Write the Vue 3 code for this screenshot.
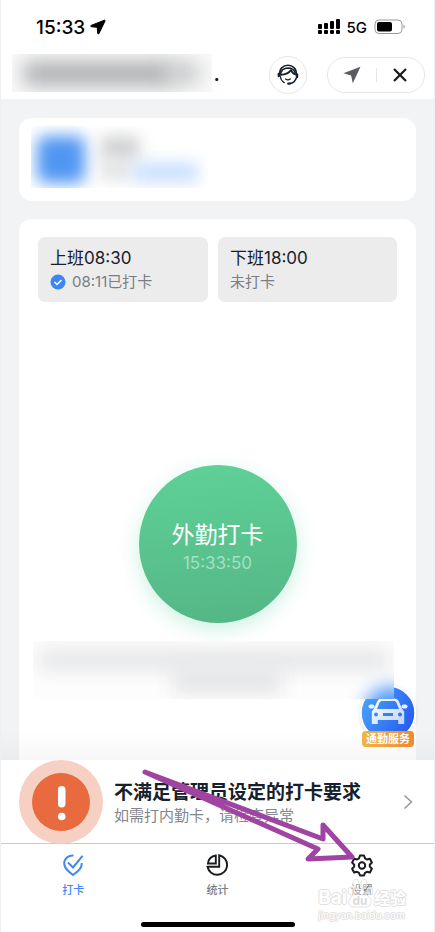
<script setup>
import { ref } from 'vue'

const shifts = [
  { id: 'in', title: '上班08:30', note: '08:11已打卡', done: true },
  { id: 'out', title: '下班18:00', note: '未打卡', done: false }
]
const clock = ref('15:33:50')
const signal = [5, 6, 8, 10]
</script>

<template>
  <div class="screen">
    <header>
      <div class="status">
        <div class="time">
          <span>15:33</span>
          <svg width="16" height="16" viewBox="0 0 16 16"><path d="M14.4 1.2 1.2 6.4c-.8.4-.7 1.2.2 1.3l5.800.6.5 5.900c.1.8.9 1 1.300.2L15 2c.3-.6-.1-1-.6-.8z" fill="#000" stroke="#000" stroke-width="1" /></svg>
        </div>
        <div class="radio">
          <svg width="22" height="16" viewBox="0 0 22 16">
            <g v-for="(h, i) in signal" :key="i">
              <rect :x="i * 6" :y="10 - h" width="4" :height="h" rx="1" />
              <rect :x="i * 6" y="11" width="4" height="4" rx="1" />
            </g>
          </svg>
          <span>5G</span>
          <svg width="32" height="16" viewBox="0 0 32 16">
            <rect x="1" y="1" width="27" height="13.500" rx="4" fill="none" stroke="#999" stroke-width="1" />
            <rect x="3" y="3" width="15" height="9.500" rx="2" />
            <path d="M29.500 5.500c1.800.6 1.800 3.400 0 4z" fill="#999" />
          </svg>
        </div>
      </div>
      <div class="nav">
        <span class="dots">..</span>
        <div class="masked-title"><i></i><b></b></div>
        <button class="service" aria-label="客服">
          <svg width="24" height="24" viewBox="0 0 24 24" fill="none" stroke="#17212c" stroke-linecap="round" stroke-linejoin="round">
            <path d="M3.800 12C3 6 7 2.300 12 2.300S20.800 6 20.300 11.500" stroke-width="1.600" />
            <path d="M4.500 11.500C5 7.500 8 5.200 12 5c3.500 0 6.300 2 7.200 5" stroke-width="1.500" />
            <path d="M2.800 11v2" stroke-width="2.400" />
            <path d="M21 11.500v2.500" stroke-width="2.400" />
            <path d="M4.500 11.800c5.500-.3 8.500-1.500 10.500-4.800M15 7c.6 2.200 2 3.500 4.500 4.500" stroke-width="1.800" />
            <path d="M4.300 13.500c.4 2.800 1.700 4.800 4 6.200M9.500 16c1.500 1.200 3.300 1.200 4.800 0" stroke-width="1.200" />
            <path d="M20.500 14.500c-1 3.500-3.300 5.700-7 6" stroke-width="1.500" />
            <path d="M12.300 20.600h1.500" stroke-width="2.400" />
          </svg>
        </button>
        <div class="capsule">
          <button aria-label="定位">
            <svg width="18" height="18" viewBox="0 0 18 18"><path d="M17.500.8.4 7.200l7.700 2.400 1.700 7.600z" fill="#5b5d60" /></svg>
          </button>
          <button aria-label="关闭">
            <svg width="16" height="16" viewBox="0 0 16 16"><path d="m2 2 12 12M14 2 2 14" stroke="#17191c" stroke-width="2.200" /></svg>
          </button>
        </div>
      </div>
    </header>

    <main>
      <section class="card profile">
        <div class="masked-profile"><i class="avatar"></i><i class="name"></i><i class="sub"></i><i class="tag"></i></div>
      </section>
      <section class="card punch">
        <div class="shifts">
          <div v-for="s in shifts" :key="s.id" class="shift">
            <div class="shift-title">{{ s.title }}</div>
            <div class="shift-note">
              <svg v-if="s.done" width="16" height="16" viewBox="0 0 16 16"><circle cx="8" cy="8" r="7.500" fill="#3e86f6" /><path d="m4.500 8 2.500 2.500 4.500-4.500" fill="none" stroke="#fff" stroke-width="1.500" /></svg>
              <span>{{ s.note }}</span>
            </div>
          </div>
        </div>
        <button class="clock">
          <span class="clock-title">外勤打卡</span>
          <span class="clock-time">{{ clock }}</span>
        </button>
        <div class="masked-place"><i class="line-one"></i><i class="line-two"></i><i class="blue"></i></div>
      </section>
      <a class="commute" href="#commute">
        <svg width="56" height="56" viewBox="0 0 56 56">
          <defs>
            <linearGradient id="sky" x1="0" y1="0.200" x2="1" y2="0.700"><stop offset="0" stop-color="#49a5fb" /><stop offset="1" stop-color="#265af0" /></linearGradient>
            <linearGradient id="body" x1="0" y1="0" x2="1" y2="1"><stop offset="0" stop-color="#fff" /><stop offset="1" stop-color="#bdd5fc" /></linearGradient>
          </defs>
          <circle cx="28" cy="28" r="27" fill="url(#sky)" stroke="#fff" stroke-width="1.500" />
          <path fill="url(#body)" fill-rule="evenodd" d="M22 13.500h12c2.500 0 4 1 5 3.200l3.200 7.300 2 2.500V39h-6v-4H17.800v4h-6V26.500l2-2.500L17 16.700c1-2.200 2.500-3.200 5-3.200zm.5 2.500c-1.700 0-2.500.6-3.100 2L17 24h22l-2.400-6c-.6-1.400-1.400-2-3.100-2zM16 27.500a2 2 0 1 0 0 4 2 2 0 0 0 0-4zm24 0a2 2 0 1 0 0 4 2 2 0 0 0 0-4zm-17 .5v3h10v-3z" />
          <rect x="8.500" y="19.500" width="6" height="4" rx="2" fill="#e8f2ff" /><rect x="41.500" y="19.500" width="6" height="4" rx="2" fill="#e8f2ff" />
        </svg>
        <span>通勤服务</span>
      </a>
    </main>

    <footer>
      <a class="alert" href="#rules">
        <svg class="warn" width="84" height="84" viewBox="0 0 84 84">
          <circle cx="42" cy="42" r="42" fill="#f6d0c2" /><circle cx="42" cy="42" r="29" fill="#e96a3e" />
          <rect x="39" y="26" width="7.500" height="21.500" rx="3.700" fill="#fff" /><circle cx="42.700" cy="56.500" r="3.800" fill="#fff" />
        </svg>
        <div class="alert-text">
          <strong>不满足管理员设定的打卡要求</strong>
          <span>如需打内勤卡，请检查异常</span>
        </div>
        <svg class="chevron" width="10" height="16" viewBox="0 0 10 16"><path d="m1.500 1.500 7 6.500-7 6.500" fill="none" stroke="#92969b" stroke-width="1.500" /></svg>
      </a>
      <nav class="tabs">
        <a class="active" href="#punch">
          <svg width="24" height="24" viewBox="0 0 24 24" fill="none" stroke="#3d87f5" stroke-width="2"><path d="M12.500 2.500c-5-.4-9.300 3-9.300 8 0 4.500 3.500 7.500 8.800 11.500 5.300-4 9.200-7 8.800-12M7 9.500l5 5 9.500-11.700" /></svg>
          <span>打卡</span>
        </a>
        <a href="#stats">
          <svg width="24" height="24" viewBox="0 0 24 24" fill="none" stroke="#191b1e" stroke-width="1.900"><path d="M14.200 2.200a9.900 9.900 0 1 1-11.700 11.600h11.700z" /><path d="M10.800 2.500v8H3c.5-4.200 3.500-7.500 7.800-8z" /></svg>
          <span>统计</span>
        </a>
        <a href="#settings">
          <svg width="24" height="24" viewBox="0 0 24 24" fill="none" stroke="#191b1e" stroke-width="2" stroke-linejoin="round"><path d="M10 2.500h4l1 2.900 1.900 1.100 3-.7 2 3.700-2.100 2.200v1.900l2.100 2.200-2 3.600-3-.6-1.900 1.100-1 2.600h-4l-1-2.600-1.900-1.100-3 .6-2-3.600 2.100-2.200v-1.900L2.100 9.500l2-3.700 3 .7L9 5.400z" /><circle cx="12" cy="12.500" r="3.200" /></svg>
          <span>设置</span>
        </a>
      </nav>
      <div class="home-bar"></div>
      <svg class="arrow" width="216" height="96" viewBox="0 0 216 96"><path d="m5 5 178 67v-14l29 32-44 2 10-10z" fill="none" stroke="#a044a2" stroke-width="5" stroke-linejoin="round" /><path d="m5 5 75 27v7z" fill="#a044a2" /></svg>
      <div class="watermark">
        <div class="mark-name">
          <span>Bai</span>
          <svg width="27" height="30" viewBox="0 0 27 30" fill="#fff" fill-opacity="0.400" stroke="#e1e1e1"><ellipse cx="9" cy="5" rx="3" ry="4.500" /><ellipse cx="17" cy="5" rx="3" ry="4.500" /><ellipse cx="4" cy="12" rx="3" ry="4" /><ellipse cx="23" cy="12" rx="3" ry="4" /><path d="M13 10c4 0 5 4 8 7 5 4 4 12-3 11H8c-7 1-8-6-3-11 3-3 4-7 8-7z" /><text x="13" y="26" text-anchor="middle" class="du">du</text></svg>
          <span>经验</span>
        </div>
        <div class="mark-url">jingyan.baidu.com</div>
      </div>
    </footer>
  </div>
</template>

<style>
body { background: #f2f3f5; }
</style>

<style scoped>
.screen { box-sizing: border-box; min-height: 100vh; display: flex; flex-direction: column; overflow: hidden; border: 0 solid #eeeff0; border-width: 0 1px; font-family: Inter, "Noto Sans CJK SC", sans-serif; color: #17212c; }
button { font: inherit; border: 0; padding: 0; background: none; display: flex; align-items: center; justify-content: center; }
a { color: inherit; text-decoration: none; }
svg { display: block; flex: none; }
header { background: #fff; }
.status { height: 54px; display: flex; align-items: center; justify-content: space-between; padding: 0 28px 0 35px; color: #000; }
.time { display: flex; align-items: center; gap: 5px; font-size: 19px; font-weight: 500; }
.radio { display: flex; align-items: center; gap: 7px; font-size: 15px; font-weight: 500; }
.nav { position: relative; height: 45px; display: flex; align-items: flex-start; padding: 0 9px 0 11px; }
.masked-title { position: absolute; left: 11px; top: 0; width: 200px; height: 38px; overflow: hidden; background: #fafafa; }
.masked-title i { position: absolute; left: 12px; top: 8px; width: 150px; height: 23px; background: #a8aaac; filter: blur(10px); }
.masked-title b { position: absolute; left: 156px; top: 8px; width: 32px; height: 22px; background: #c6c8ca; filter: blur(10px); }
.dots { flex: 1; padding-left: 195px; color: #17191c; font-size: 20px; font-weight: 600; line-height: 41px; }
.service { box-sizing: border-box; width: 38px; height: 38px; margin: 2px 20px 0 0; border: 1px solid #e5e6e7; border-radius: 50%; }
.capsule { box-sizing: border-box; display: flex; align-items: center; width: 98px; height: 36px; margin-top: 3px; border: 1px solid #e5e6e7; border-radius: 18px; }
.capsule button { flex: 1; height: 14px; }
.capsule button + button { border-left: 1px solid #e5e6e7; }
main { position: relative; flex: 1; display: flex; flex-direction: column; padding: 19px 18px 0; gap: 18px; }
main::after { content: ""; position: absolute; left: 0; right: 0; bottom: 0; height: 30px; background: linear-gradient(transparent, #00000008); pointer-events: none; }
.card { background: #fff; border-radius: 13px; }
.profile { box-sizing: border-box; height: 83px; padding: 8px 12px; }
.masked-profile { position: relative; width: 177px; height: 62px; overflow: hidden; }
.masked-profile i { position: absolute; filter: blur(8px); }
.masked-profile .avatar { left: 6px; top: 10px; width: 48px; height: 47px; border-radius: 8px; background: #5096f1; }
.masked-profile .name { left: 70px; top: 10px; width: 38px; height: 24px; background: #d0d1d2; }
.masked-profile .sub { left: 70px; top: 34px; width: 30px; height: 20px; background: #e0e1e2; }
.masked-profile .tag { left: 102px; top: 37px; width: 65px; height: 19px; background: #c7defd; }
.punch { flex: 1; display: flex; flex-direction: column; border-radius: 13px 13px 0 0; padding: 18px 14px 61px; }
.shifts { display: grid; grid-template-columns: 170fr 179fr; gap: 10px; padding: 0 5px; }
.shift { box-sizing: border-box; height: 65px; padding: 9px 12px 0; background: #ececec; border-radius: 7px; }
.shift-title { font-size: 17px; line-height: 24px; }
.shift-note { display: flex; align-items: center; gap: 6px; font-size: 15px; line-height: 24px; color: #797e85; }
.clock { flex-direction: column; align-self: center; box-sizing: border-box; width: 158px; height: 158px; margin-top: 163px; padding-top: 6px; border-radius: 50%; color: #fff; background: linear-gradient(175deg, #5fd198, #54b685); box-shadow: 0 6px 20px #35c98b40; }
.clock-title { font-size: 23px; line-height: 32px; font-weight: 400; }
.clock-time { font-size: 17px; line-height: 24px; color: #a5dfc4; }
.masked-place { position: relative; z-index: 2; height: 58px; margin: 18px 8px 0 0; overflow: hidden; background: #fdfdfd; }
.masked-place i { position: absolute; filter: blur(9px); }
.line-one { left: 6px; right: 6px; top: 8px; height: 22px; background: #e6e7e8; }
.line-two { left: 140px; right: 112px; top: 28px; height: 25px; background: #e4e5e7; }
.masked-place .blue { left: 331px; top: 46px; width: 54px; height: 54px; border-radius: 50%; background: #4a94fa; }
.commute { position: absolute; z-index: 1; right: 18px; bottom: 13px; display: flex; flex-direction: column; align-items: center; width: 56px; }
.commute svg { margin-bottom: -10px; border-radius: 50%; box-shadow: 0 1px 4px #00000020; }
.commute span { position: relative; width: 52px; border-radius: 4px; background: linear-gradient(90deg, #efb447, #ef8932); color: #fff; font-size: 11px; font-weight: 700; line-height: 16px; text-align: center; }
footer { position: relative; background: #fff; }
.alert { display: flex; align-items: center; height: 83px; padding: 0 21px 0 18px; border-bottom: 1px solid #c9cacc; }
.alert-text { flex: 1; display: flex; flex-direction: column; margin-left: 11px; padding-top: 4px; white-space: nowrap; }
.alert-text strong { font-size: 19px; font-weight: 600; line-height: 24px; }
.alert-text span { font-size: 15px; line-height: 22px; color: #82878d; }
.tabs { display: grid; grid-template-columns: repeat(3, 1fr); height: 77px; }
.tabs a { display: flex; flex-direction: column; align-items: center; gap: 5px; padding-top: 9px; font-size: 11px; font-weight: 500; line-height: 16px; color: #777c83; }
.tabs a.active { color: #3d87f5; }
.home-bar { width: 154px; height: 5px; margin: 1px auto 5px; background: #000; border-radius: 3px; }
.arrow { position: absolute; right: 78px; top: 7px; pointer-events: none; }
.watermark { position: absolute; right: 28px; bottom: 11px; color: #fff; text-shadow: 1px 0 #e1e1e1, -1px 0 #e1e1e1, 0 1px #e1e1e1, 0 -1px #e1e1e1; pointer-events: none; }
.mark-name { display: flex; align-items: flex-end; font-size: 16px; font-weight: 700; line-height: 22px; }
.mark-name span:first-child { font-size: 19px; }
.mark-url { font-size: 10px; line-height: 12px; }
.du { font-size: 12px; font-weight: 700; fill: #dcdcdc; fill-opacity: 1; stroke: none; text-shadow: none; }
</style>
